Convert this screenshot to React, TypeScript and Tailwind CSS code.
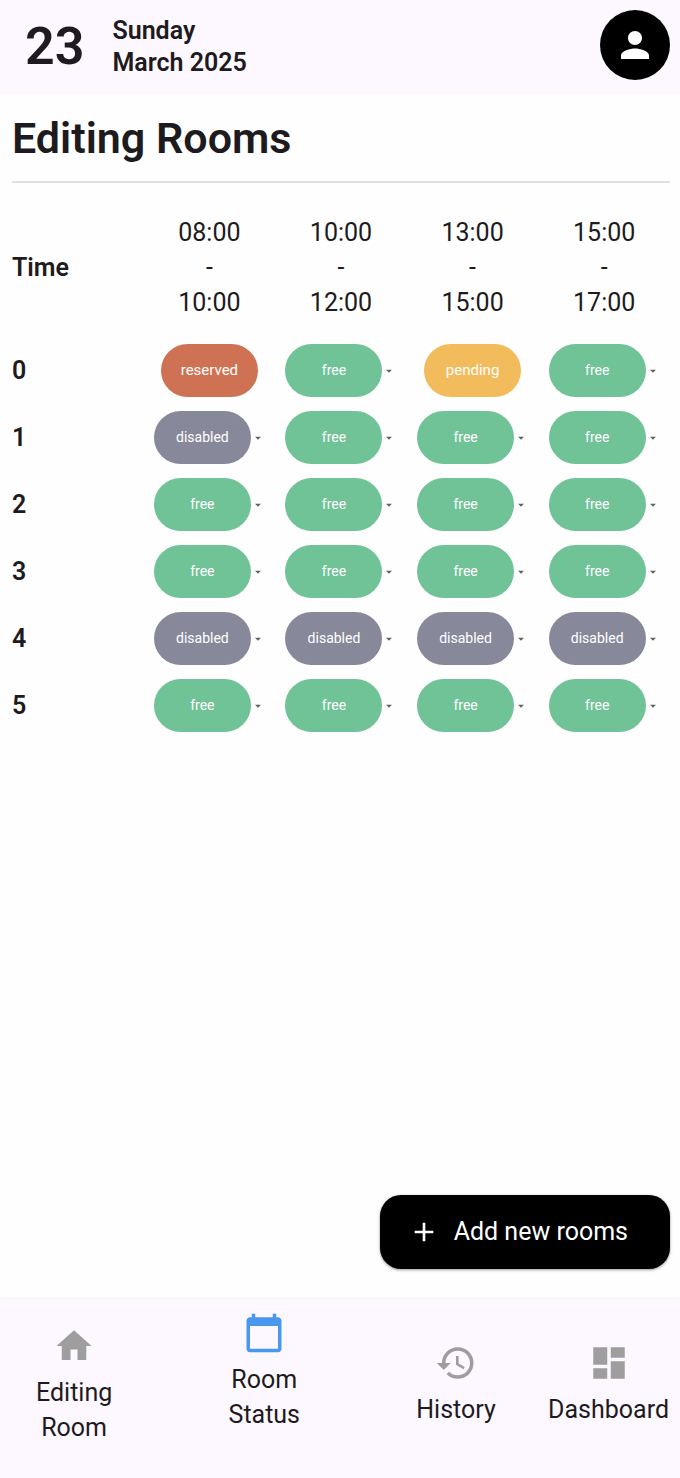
import { useState, type ReactNode } from "react";
import {
  MdAdd,
  MdArrowDropDown,
  MdCalendarToday,
  MdDashboard,
  MdHistory,
  MdHome,
  MdPerson,
} from "react-icons/md";

type Status = "free" | "disabled" | "reserved" | "pending";

const slots = [
  ["08:00", "10:00"],
  ["10:00", "12:00"],
  ["13:00", "15:00"],
  ["15:00", "17:00"],
];

const initialRooms: Status[][] = [
  ["reserved", "free", "pending", "free"],
  ["disabled", "free", "free", "free"],
  ["free", "free", "free", "free"],
  ["free", "free", "free", "free"],
  ["disabled", "disabled", "disabled", "disabled"],
  ["free", "free", "free", "free"],
];

const fill: Record<Status, string> = {
  free: "bg-[#70c297]",
  disabled: "bg-[#88889b]",
  reserved: "bg-[#cf7253]",
  pending: "bg-[#f2bc5c]",
};

const pill = "h-[53px] w-[97px] shrink-0 rounded-full text-center text-white";

function SlotCell({
  status,
  label,
  onChange,
}: {
  status: Status;
  label: string;
  onChange: (next: Status) => void;
}) {
  if (status === "reserved" || status === "pending") {
    return (
      <button type="button" className={`${pill} ${fill[status]} block mx-auto text-[15px]`}>
        {status}
      </button>
    );
  }
  return (
    <label className="flex items-center justify-center">
      <select
        aria-label={label}
        value={status}
        onChange={(e) => onChange(e.target.value as Status)}
        className={`${pill} ${fill[status]} cursor-pointer appearance-none text-[14px]`}
      >
        <option value="free">free</option>
        <option value="disabled">disabled</option>
      </select>
      <MdArrowDropDown className="size-[14px] shrink-0 text-[#616161]" />
    </label>
  );
}

function NavItem({
  icon,
  children,
  className = "",
}: {
  icon: ReactNode;
  children: ReactNode;
  className?: string;
}) {
  return (
    <a
      href="#"
      className={`flex flex-col items-center gap-[8px] text-center text-[25px] leading-[35px] text-[#1d1b20] ${className}`}
    >
      {icon}
      <span>{children}</span>
    </a>
  );
}

export default function App() {
  const [rooms, setRooms] = useState(initialRooms);

  const update = (room: number, slot: number, next: Status) =>
    setRooms((all) =>
      all.map((row, r) => (r === room ? row.map((s, i) => (i === slot ? next : s)) : row)),
    );

  return (
    <div className="flex min-h-screen flex-col bg-[#fefefe] font-[Roboto,sans-serif] text-[#1d1b20]">
      <header className="flex items-center bg-[#fdf7ff] py-[10px] pr-[10px] pl-[25px]">
        <span className="text-[52px] leading-[74px] font-semibold">23</span>
        <p className="ml-[28px] text-[25px] leading-[32px] font-semibold">
          Sunday
          <br />
          March 2025
        </p>
        <button
          type="button"
          aria-label="Profile"
          className="ml-auto flex size-[70px] items-center justify-center self-start rounded-full bg-black text-white"
        >
          <MdPerson className="size-[42px]" />
        </button>
      </header>

      <main className="flex grow flex-col pr-[10px] pb-[30px] pl-[12px]">
        <h1 className="border-b-2 border-[#e0e0e0] pt-[16px] pb-[15px] text-[43px] leading-[56px] font-semibold">
          Editing Rooms
        </h1>

        <table className="mt-[14px] w-full table-fixed">
          <thead>
            <tr className="h-[140px] text-[25px] leading-[35px]">
              <th scope="col" className="p-0 text-left font-semibold">
                Time
              </th>
              {slots.map(([from, to]) => (
                <th key={from} scope="col" className="p-0 font-normal">
                  {from}
                  <br />-<br />
                  {to}
                </th>
              ))}
            </tr>
          </thead>
          <tbody>
            {rooms.map((row, r) => (
              <tr key={r} className="h-[67px]">
                <th scope="row" className="p-0 text-left text-[25px] leading-[36px] font-semibold">
                  {r}
                </th>
                {row.map((status, s) => (
                  <td key={s} className="p-0 text-center">
                    <SlotCell
                      status={status}
                      label={`Room ${r}, ${slots[s][0]} to ${slots[s][1]}`}
                      onChange={(next) => update(r, s, next)}
                    />
                  </td>
                ))}
              </tr>
            ))}
          </tbody>
        </table>

        <button
          type="button"
          className="mt-auto flex h-[74px] items-center gap-[14px] self-end rounded-[21px] bg-black pr-[42px] pl-[28px] text-[25px] text-white shadow-[0_1px_3px_rgba(0,0,0,0.4)]"
        >
          <MdAdd className="size-[32px]" />
          Add new rooms
        </button>
      </main>

      <nav className="flex h-[179px] items-center justify-between bg-[#fdf7ff] pr-[11px] pb-[8px] pl-[36px] shadow-[0_-1px_3px_rgba(0,0,0,0.06)]">
        <NavItem icon={<MdHome className="size-[42px] text-[#9e9e9e]" />}>
          Editing
          <br />
          Room
        </NavItem>
        <NavItem
          className="px-16 pb-[26px]"
          icon={<MdCalendarToday className="size-[42px] text-[#4a97f0]" />}
        >
          Room
          <br />
          Status
        </NavItem>
        <NavItem icon={<MdHistory className="size-[42px] text-[#9e9e9e]" />}>History</NavItem>
        <NavItem icon={<MdDashboard className="size-[42px] text-[#9e9e9e]" />}>Dashboard</NavItem>
      </nav>
    </div>
  );
}
